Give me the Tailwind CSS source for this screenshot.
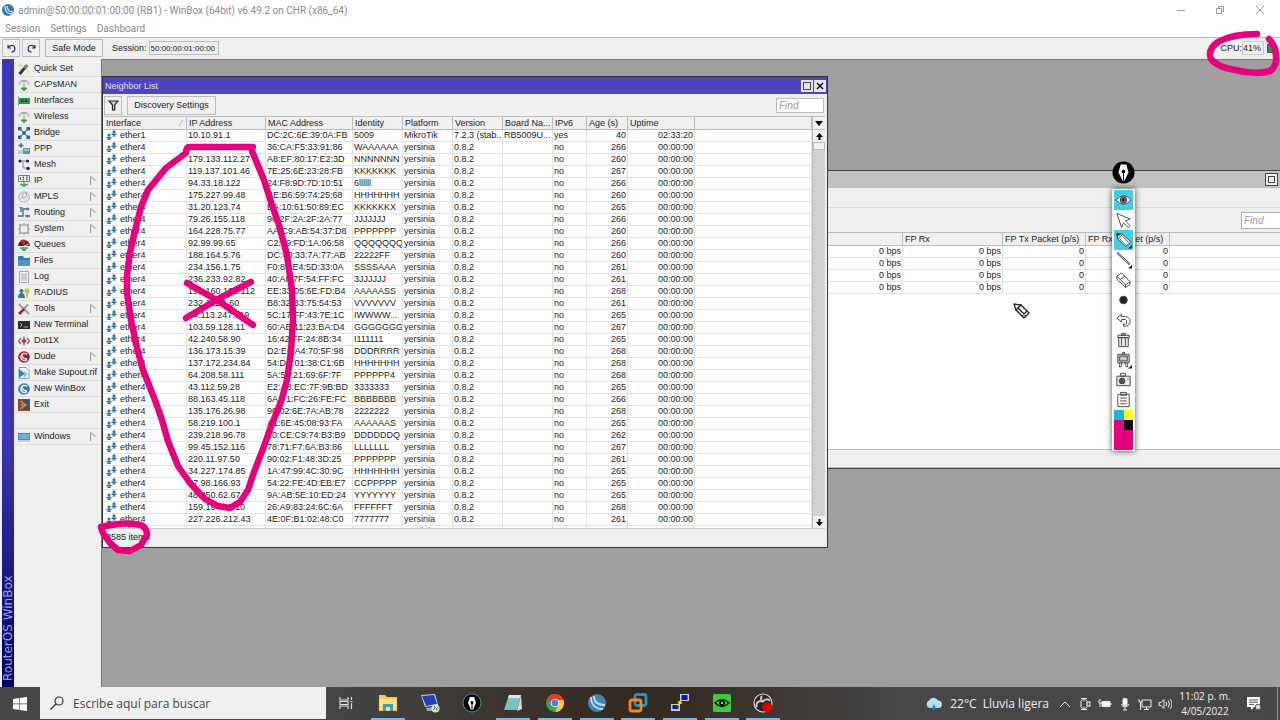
<!DOCTYPE html>
<html lang="es">
<head>
  <meta charset="UTF-8">
  <meta name="viewport" content="width=device-width, initial-scale=1">
  <title>admin@50:00:00:01:00:00 (RB1) - WinBox</title>
  <script src="https://cdn.jsdelivr.net/npm/@tailwindcss/browser@4"></script>
</head>
<body class="relative h-screen flex flex-col overflow-hidden bg-[#9f9f9f] text-[9px] leading-[11px] text-[#222] font-['Liberation_Sans',sans-serif]">

  <!-- title bar -->
  <header class="bg-white text-[#8a8a8a] text-[10px] font-['Roboto',sans-serif]">
    <div class="h-5 flex items-center pl-[2px]">
      <svg class="w-3 h-3 mr-1" viewBox="0 0 12 12"><circle cx="6" cy="6" r="6" fill="#2f78b4"/><path d="M3 2c0 5 2 8 7 8M5 2c0 3 2 6 6 6" stroke="#d5e8f5" stroke-width="1.3" fill="none"/></svg>
      <h1 class="whitespace-nowrap">admin@50:00:00:01:00:00 (RB1) - WinBox (64bit) v6.49.2 on CHR (x86_64)</h1>
      <div class="ml-auto flex">
        <button class="w-[39px] flex justify-center" aria-label="Minimizar"><svg class="w-[10px] h-[10px]" viewBox="0 0 10 10"><path d="M1 5.5h8" stroke="#999"/></svg></button>
        <button class="w-[39px] flex justify-center" aria-label="Restaurar"><svg class="w-[10px] h-[10px]" viewBox="0 0 10 10" fill="none" stroke="#999"><path d="M1.500 3.500h5v5h-5zM3.500 3v-1.500h5v5h-1.500"/></svg></button>
        <button class="w-[41px] flex justify-center" aria-label="Cerrar"><svg class="w-[10px] h-[10px]" viewBox="0 0 10 10"><path d="M1 1l8 8M9 1l-8 8" stroke="#999"/></svg></button>
      </div>
    </div>
    <nav class="h-[17px] flex items-center gap-[10px] pl-[5px]">
      <button>Session</button>
      <button>Settings</button>
      <button>Dashboard</button>
    </nav>
  </header>

  <!-- toolbar -->
  <div class="h-[22px] flex items-center bg-[#efefef] border-t border-[#b5b5b5] pl-[2px] pb-px text-[9px]">
    <button class="w-[18px] h-[18px] mr-[2px] border border-[#bbb] flex items-center justify-center" aria-label="Undo"><svg class="w-[9px] h-[9px]" viewBox="0 0 9 9" fill="none" stroke="#2c2c80" stroke-width="1.200"><path d="M1 1v3h3M1.500 3.500a3.300 3.300 0 1 1 3 4.500"/></svg></button>
    <button class="w-[18px] h-[18px] mr-[5px] border border-[#bbb] flex items-center justify-center" aria-label="Redo"><svg class="w-[9px] h-[9px]" viewBox="0 0 9 9" fill="none" stroke="#2c2c80" stroke-width="1.200"><path d="M8 1v3H5M7.500 3.500a3.300 3.300 0 1 0-3 4.500"/></svg></button>
    <button class="w-[58px] h-[18px] mr-[9px] border border-[#bbb]">Safe Mode</button>
    <label for="session" class="mr-[2px]">Session:</label>
    <input id="session" class="w-[70px] h-[14px] border border-[#bbb] pl-px text-[8px]" value="50:00:00:01:00:00" readonly>
    <div class="ml-auto flex items-center pr-1">
      <label for="cpu">CPU:</label>
      <input id="cpu" class="w-[22px] h-[14px] border border-[#ccc] text-[9px]" value="41%" readonly>
      <span class="w-[9px] h-[9px] ml-[3px] bg-[#1c9e3d] border border-[#555]"></span>
    </div>
  </div>

  <main class="flex-1 min-h-0 flex">
    <!-- main menu -->
    <aside class="w-[101px] shrink-0 flex bg-[#efefef] pl-[2px]">
      <div class="w-3 flex items-center justify-start pt-[6px] pb-[6px] rotate-180 [writing-mode:vertical-rl] bg-linear-to-t from-[#3e36b4] from-60% to-[#000060]">
        <span class="text-[12px] leading-3 text-[#a0a0dd] whitespace-nowrap font-['DejaVu_Sans',sans-serif]">RouterOS WinBox</span>
      </div>
      <nav id="menu" class="flex-1 pl-px pt-[2px]"></nav>
    </aside>

    <section class="relative flex-1 overflow-hidden border-t border-l border-[#777]">
      <!-- interface list, behind -->
      <div class="absolute top-[110px] left-[600px] right-[-16px] flex flex-col bg-[#efefef] border border-[#444]">
        <div class="h-[17px] flex items-center justify-end bg-[#c0c0c0] pr-[17px]">
          <button class="w-[13px] h-[13px] border border-[#444] bg-[#eee] p-[2px]" aria-label="Maximizar"><span class="block w-full h-full border border-[#444]"></span></button>
        </div>
        <div class="h-5 border-b border-[#ddd]"></div>
        <div class="h-6 flex items-center justify-end">
          <input class="w-[54px] h-[17px] border border-[#aaa] bg-white pl-[2px] text-[10px] italic placeholder:text-[#999]" placeholder="Find" aria-label="Find interface">
        </div>
        <div class="h-[217px] bg-white overflow-hidden">
          <table class="w-full table-fixed border-separate border-spacing-0 text-left">
            <colgroup><col class="w-[200px]"><col class="w-[100px]"><col class="w-[83px]"><col class="w-[84px]"><col></colgroup>
            <thead><tr id="fp-head"></tr></thead>
            <tbody id="fp-body"></tbody>
          </table>
        </div>
        <div class="h-[19px] border-t border-b border-[#bbb]"></div>
      </div>

      <!-- neighbor list -->
      <div class="absolute top-[16px] left-0 w-[726px] flex flex-col bg-[#efefef] border border-[#333]">
        <div class="h-[17px] flex items-center bg-[#4d45be] text-[#e2e2f8] pl-[2px] pr-px">
          <h2 class="pt-px">Neighbor List</h2>
          <button class="ml-auto w-3 h-3 bg-[#e4e4e4] p-[2px]" aria-label="Maximizar"><span class="block w-full h-full border border-[#444]"></span></button>
          <button class="ml-px w-3 h-3 bg-[#e4e4e4] flex items-center justify-center" aria-label="Cerrar"><svg class="w-2 h-2" viewBox="0 0 8 8"><path d="M1 1l6 6M7 1l-6 6" stroke="#111" stroke-width="1.500"/></svg></button>
        </div>
        <div class="h-[22px] flex items-center pl-px pr-[3px]">
          <button class="w-[18px] h-[19px] mr-[5px] border border-[#bbb] flex items-center justify-center" aria-label="Filtrar"><svg class="w-[11px] h-[11px]" viewBox="0 0 11 11"><path d="M1 1h9L6.800 5v5H4.500V5z" fill="#b9d0e8" stroke="#222" stroke-width="1.200"/></svg></button>
          <button class="w-[89px] h-[19px] border border-[#bbb]">Discovery Settings</button>
          <input class="ml-auto w-12 h-[15px] border border-[#bbb] bg-white pl-[2px] text-[10px] italic placeholder:text-[#999]" placeholder="Find" aria-label="Find neighbor">
        </div>
        <div class="h-[413px] flex ml-px mr-[2px] bg-white overflow-hidden border-b border-[#ccc]">
          <table class="flex-1 w-full self-start table-fixed border-separate border-spacing-0 text-left">
            <colgroup><col class="w-[83px]"><col class="w-[79px]"><col class="w-[87px]"><col class="w-[50px]"><col class="w-[50px]"><col class="w-[50px]"><col class="w-[50px]"><col class="w-[34px]"><col class="w-[41px]"><col class="w-[67px]"><col></colgroup>
            <thead><tr id="nb-head"></tr></thead>
            <tbody id="nb-body"></tbody>
          </table>
          <div class="w-[13px] flex flex-col items-stretch border-l border-[#bbb] bg-[#d2d2d2]">
            <button class="h-[14px] bg-[#efefef] border-y border-[#bbb] flex items-center justify-center" aria-label="Columnas"><svg class="w-2 h-[5px]" viewBox="0 0 8 5"><path d="M0 0h8L4 5z"/></svg></button>
            <button class="h-3 bg-[#efefef] flex items-center justify-center" aria-label="Subir"><svg class="w-[7px] h-[7px]" viewBox="0 0 7 7"><path d="M3.500 0L7 4H4.500v3h-2V4H0z"/></svg></button>
            <div class="h-2 bg-[#efefef] border border-[#bbb]"></div>
            <button class="mt-auto h-3 bg-[#efefef] flex items-center justify-center" aria-label="Bajar"><svg class="w-[7px] h-[7px]" viewBox="0 0 7 7"><path d="M3.500 7L7 3H4.500V0h-2v3H0z"/></svg></button>
          </div>
        </div>
        <div class="h-[18px] flex items-center pl-[3px] pb-[2px]">3585 items</div>
      </div>
    </section>
  </main>

  <!-- taskbar -->
  <footer class="h-[33px] flex items-stretch text-[#f0f0f0] font-['Open_Sans',sans-serif] bg-linear-to-r from-[#474747] from-25% via-[#33291f] via-50% to-[#474747] to-70%">
    <button class="w-10 flex items-center justify-center" aria-label="Inicio"><svg class="w-[14px] h-[14px]" viewBox="0 0 14 14" fill="#fff"><path d="M0 2l6-.9v5.500H0zM6.600 1L14 0v6.600H6.600zM0 7.200h6v5.600L0 12zM6.600 7.200H14V14l-7.400-1z"/></svg></button>
    <label class="w-[286px] mb-px flex items-center gap-[9px] bg-[#f0f0f0] pl-[10px] text-[#444]">
      <svg class="w-[14px] h-[14px]" viewBox="0 0 14 14" fill="none" stroke="#333" stroke-width="1.200"><circle cx="9" cy="5" r="4"/><path d="M6 8l-5.500 5.500"/></svg>
      <input class="flex-1 min-w-0 text-[12px] placeholder:text-[#444] outline-none" placeholder="Escribe aquí para buscar" aria-label="Buscar">
    </label>
    <div id="tasks" class="w-[458px] flex"></div>
    <div class="ml-auto flex items-center pr-[2px]">
      <button class="flex items-center text-[12px] leading-4 mr-[6px]">
        <svg class="w-[18px] h-[14px] mr-[7px]" viewBox="0 0 18 14"><path d="M4.500 11a4 4 0 0 1-.5-7.500A5 5 0 0 1 13 3.500a3.800 3.800 0 0 1 1 7.500z" fill="#b9dff5"/><path d="M9 7l2 4a2 2 0 1 1-4 0z" fill="#2b86c9"/></svg>
        <span class="mr-[6px]">22°C</span><span>Lluvia ligera</span>
      </button>
      <div id="tray" class="flex items-center"></div>
      <div class="w-[60px] text-center text-[10px] leading-[15px] whitespace-nowrap"><p>11:02 p. m.</p><p>4/05/2022</p></div>
      <button class="w-[38px] flex justify-center" aria-label="Notificaciones"><svg class="w-[14px] h-[14px]" viewBox="0 0 14 14"><path d="M0 0h13v10H7l-3 3v-3H0z" fill="#fff"/><path d="M2 3h9M2 5.200h9M2 7.400h5" stroke="#555"/><circle cx="11" cy="10" r="2.800" fill="#ddd" stroke="#555"/></svg></button>
      <span class="w-px h-[33px] ml-1 bg-[#888]"></span>
    </div>
  </footer>

  <!-- drawing tools palette -->
  <div class="absolute left-[1112px] top-[161px] w-[23px] flex flex-col items-center">
    <svg class="w-[23px] h-[23px] mb-[5px]" viewBox="0 0 22 23"><circle cx="11" cy="11.500" r="11" fill="#000"/><path d="M8.200 3.500h5.600l2.200 8-4 8h-2l-4-8z" fill="#fff"/><path d="M11 11v8" stroke="#000"/><circle cx="11" cy="10.500" r="1.800"/></svg>
    <div class="w-[23px] px-[2px] py-px bg-white shadow-[0_0_6px_rgba(0,0,0,.7)]">
      <div id="tools"></div>
      <div class="grid grid-cols-2">
        <button class="h-[10px] bg-[#17b8dc]" aria-label="Cian"></button>
        <button class="h-[10px] bg-[#ffff1a]" aria-label="Amarillo"></button>
        <button class="h-[10px] bg-[#e6007e]" aria-label="Magenta"></button>
        <button class="h-[10px] bg-black" aria-label="Negro"></button>
        <span class="h-5 col-span-2 bg-[#e6007e]"></span>
      </div>
    </div>
  </div>

  <!-- ink and pencil cursor -->
  <svg class="absolute left-0 top-0 w-[1280px] h-[720px] pointer-events-none" viewBox="0 0 1280 720" fill="none" stroke="#e6007e" stroke-width="6.500" stroke-linecap="round" stroke-linejoin="round">
    <path d="M253 147H190Q186 147 186 153L166 168 148 190 141 207 134 235 130 253 127 275 127 293 131 320 137 348 143 370 151 390 155 400 162 420 168 441 178 466 190 483 205 499 218 506 230 508 240 502 248 490 254 472 263 449 272 424 281 402 287 380 291 352 293 320 292 290 287 255 279 225 272 205 264 180 252 151"/>
    <path d="M187 283L220 302 253 325M186 318L220 298 251 282"/>
    <path d="M101 527Q125 521 141 525Q147 528 147 535L141 545 130 551 118 550 110 543 103 533 101 527"/>
    <path d="M1257 34Q1232 34 1218 42Q1207 50 1211 59Q1217 67 1235 70Q1255 75 1270 71Q1277 66 1276 56Q1276 46 1269 39"/>
    <g stroke="#222" stroke-width="1.300" fill="#fff"><path d="M1014 304l2 6 8 8 5-5-8-8z"/><path d="M1016 310l5-5M1018 308l8 8M1022 316l5-5"/></g>
  </svg>

<script>
const svg12 = (body) => `<svg class="w-3 h-3 shrink-0" viewBox="0 0 12 12">${body}</svg>`;

const antenna = '<path d="M1 6a5 4.500 0 0 1 10 0M6 2v7" stroke="#9ab0a8" stroke-width="1.300" fill="none"/><path d="M3 9.500h6M5 11h2" stroke="#3da03d" stroke-width="1.800"/>';
const swirl = (c) => `<circle cx="6" cy="6" r="5.800" fill="${c}"/><path d="M9 3.500a3.600 3.600 0 1 0 0 5M4 3c0 3 2 5 5 5" stroke="#fff" stroke-width="1.300" fill="none"/>`;

const menu = [
  ['Quick Set', '<path d="M1.500 11L9 2.500" stroke="#333" stroke-width="3"/><path d="M6.500 5.500L9.500 2" stroke="#888" stroke-width="2"/><path d="M2.500 0v5M0 2.500h5M10 7v3" stroke="#e6dc4a"/>'],
  ['CAPsMAN', antenna],
  ['Interfaces', '<path d="M.5 1v10" stroke="#999"/><path d="M1 3h11v6H1z" fill="#2a9b32"/><path d="M3 4.500h2.500v2.500H3zM7 4.500h2.500v2.500H7z" fill="#115a18"/>'],
  ['Wireless', antenna],
  ['Bridge', '<path d="M1 1l10 10M11 1L1 11" stroke="#5e8fb0" stroke-width="1.300"/><path d="M0 0h3.500v3.500H0zM8.500 0H12v3.500H8.500zM0 8.500h3.500V12H0zM8.500 8.500H12V12H8.500zM4.300 4.300h3.400v3.400H4.300z" fill="#33678f"/>'],
  ['PPP', '<path d="M3 0v5M.5 2.500h5" stroke="#33678f" stroke-width="1.300"/><path d="M0 7h5v4H0z" fill="#b8cddb"/><path d="M5 5h7v6H5z" fill="#5b93bb"/><path d="M6 7h5" stroke="#dcebf5"/>'],
  ['Mesh', '<path d="M2 2h7M5 2v7h5" stroke="#888" fill="none"/><circle cx="2" cy="2" r="1.600" fill="#23237a"/><circle cx="9.500" cy="2" r="1.600" fill="#23237a"/><circle cx="10" cy="9.500" r="1.800" fill="#23237a"/>'],
  ['IP', '<path d="M.5.500h11v6H.5z" fill="#f5f5f5" stroke="#777"/><path d="M2.500 2v3M4.500 2h1.500l-1 1.300 1 1.500h-1.500M8 2h1.500l-1 1.300 1 1.500H8" stroke="#333" fill="none" stroke-width=".8"/><path d="M6 7v2" stroke="#777"/><path d="M2 9.500h8M4.500 11h3" stroke="#3da03d" stroke-width="1.700"/>', 1],
  ['MPLS', '<circle cx="6" cy="6" r="5.300" fill="#dfe5e8" stroke="#a9b4ba"/><path d="M4 7l1-4 4-1-1 4z" fill="#fff" stroke="#8b989f" stroke-width=".8"/>', 1],
  ['Routing', '<path d="M0 9h5V2h6M3 2v3M7 9h5" stroke="#33678f" stroke-width="1.300" fill="none"/><path d="M9 0l3 2-3 2zM9 7l3 2-3 2zM1 0h4L3 3z" fill="#4c82a8"/>', 1],
  ['System', '<rect x="2" y="2" width="8" height="8" fill="none" stroke="#b4bfbc" stroke-width="2"/><path d="M1 1l2 2M11 1L9 3M1 11l2-2M11 11L9 9M6 0v2M6 10v2M0 6h2M10 6h2" stroke="#9caaa6" stroke-width="1.500"/>', 1],
  ['Queues', '<path d="M0 7a6 6 0 0 1 12 0z" fill="#4a2424"/><path d="M6 7L2 2a6 6 0 0 1 6-1z" fill="#c22333"/><path d="M6 7l5-2" stroke="#eee" stroke-width=".8"/><path d="M2 9h8M4 10.800h4" stroke="#3da03d" stroke-width="1.700"/>'],
  ['Files', '<path d="M0 1h5l1 2h6v8H0z" fill="#2f7fae"/><path d="M0 5h12v6H0z" fill="#4b97c2"/>'],
  ['Log', '<path d="M1.500.500h9v11h-9z" fill="#f6f6f6" stroke="#9aa7ac"/><path d="M3 3h6M3 5h6M3 7h6M3 9h6" stroke="#8d9ba1" stroke-width=".8"/>'],
  ['RADIUS', '<circle cx="3.500" cy="4" r="2" fill="#33789f"/><path d="M0 11q0-5 3.500-5T7 11z" fill="#33789f"/><circle cx="9" cy="4" r="2.500" fill="#b6c72f"/><path d="M9 5v6" stroke="#b6c72f" stroke-width="1.600"/>'],
  ['Tools', '<path d="M1 1l10 10" stroke="#999" stroke-width="2"/><path d="M1 11l5-5" stroke="#9c1f2c" stroke-width="2.500"/><path d="M6 6l4-4.500" stroke="#777" stroke-width="1.300"/>', 1],
  ['New Terminal', '<path d="M0 2h12v8H0z" fill="#2b2b2b"/><path d="M2 4l2 2-2 2M5.500 8H10" stroke="#ccc" stroke-width=".8" fill="none"/>'],
  ['Dot1X', '<path d="M3 3L.500 6 3 9M9 3l2.500 3L9 9" stroke="#666" fill="none" stroke-width="1.200"/><path d="M6 1.500v9M3.500 6h5" stroke="#b0303f" stroke-width="1.300"/><circle cx="6" cy="6" r="1.900" fill="#b0303f"/>'],
  ['Dude', swirl('#b5152b'), 1],
  ['Make Supout.rif', '<path d="M1 .5h7l3 3v8H1z" fill="#f2f5f7" stroke="#8aa0ad"/><path d="M1 2l6 4.500L1 11z" fill="#2f86b5"/><path d="M6 4l4 3-4 4z" fill="#8cc0da"/>'],
  ['New WinBox', swirl('#2d7db4')],
  ['Exit', '<path d="M0 0h12v12H0z" fill="#8a4a26"/><path d="M6 1h5v10H6z" fill="#3b5563"/><path d="M2 2l6 4-6 4M3 6h6" stroke="#d88a50" stroke-width="1.300" fill="none"/>'],
  null,
  ['Windows', '<path d="M0 2h12v7H0z" fill="#3a8fc4"/><path d="M1 3h10v5H1z" fill="#67b2dd"/><path d="M0 10h12" stroke="#aaa"/>', 1],
];
document.getElementById('menu').innerHTML = menu.map(m => m
  ? `<button class="w-full h-4 flex items-center pl-[3px] gap-1 border-b border-[#dcdcdc] text-left whitespace-nowrap">${svg12(m[1])}<span class="flex-1">${m[0]}</span>${m[2] ? '<svg class="w-[6px] h-[9px] mr-[5px]" viewBox="0 0 6 9"><path d="M.5 9V.500l5 4" fill="none" stroke="#999"/></svg>' : ''}</button>`
  : '<div class="h-4 border-b border-[#dcdcdc]"></div>').join('');

// neighbors: ip, mac, identity, age
const rows = `181.31.147.77|36:CA:F5:33:91:86|WAAAAAA|266
179.133.112.27|A8:EF:80:17:E2:3D|NNNNNNN|260
119.137.101.46|7E:25:6E:23:28:FB|KKKKKKK|267
94.33.18.122|24:F8:9D:7D:10:51|6llllll|266
175.227.99.48|BE:B6:59:74:25:68|HHHHHHH|260
31.20.123.74|BA:10:61:50:89:EC|KKKKKKX|265
79.26.155.118|90:2F:2A:2F:2A:77|JJJJJJJ|266
164.228.75.77|AA:C9:AB:54:37:D8|PPPPPPP|260
92.99.99.65|C2:89:FD:1A:06:58|QQQQQQQ|266
188.164.5.76|DC:40:33:7A:77:AB|22222FF|260
234.156.1.75|F0:85:E4:5D:33:0A|SSSSAAA|261
236.233.92.82|40:A0:7F:54:FF:FC|3JJJJJJ|261
193.160.101.112|EE:33:05:6E:FD:B4|AAAAASS|268
232.111.1.60|B8:32:B3:75:54:53|VVVVVVV|261
84.113.247.119|5C:17:FF:43:7E:1C|IWWWW...|265
103.59.128.11|60:AB:11:23:BA:D4|GGGGGGG|267
42.240.58.90|16:42:FF:24:8B:34|I111111|265
136.173.15.39|D2:E0:A4:70:5F:98|DDDRRRR|268
137.172.234.84|54:DA:01:38:C1:6B|HHHHHHH|268
64.208.58.111|5A:54:21:69:6F:7F|PPPPPP4|268
43.112.59.28|E2:A8:EC:7F:9B:BD|3333333|265
88.163.45.118|6A:F1:FC:26:FE:FC|BBBBBBB|266
135.176.26.98|90:02:6E:7A:AB:78|2222222|268
58.219.100.1|A1:6E:45:08:93:FA|AAAAAAS|265
239.218.96.78|20:CE:C9:74:B3:B9|DDDDDDQ|262
99.45.152.116|78:71:F7:6A:B3:86|LLLLLLL|267
220.11.97.50|90:02:F1:48:3D:25|PPPPPPP|261
34.227.174.85|1A:47:99:4C:30:9C|HHHHHHH|265
37.98.166.93|54:22:FE:4D:EB:E7|CCPPPPP|265
48.250.62.67|9A:AB:5E:10:ED:24|YYYYYYY|265
159.194.11.10|26:A9:83:24:6C:6A|FFFFFFT|268
227.226.212.43|4E:0F:B1:02:48:C0|7777777|261
191.189.168.73|29:DF:94:94:29:08|4UUUUUU|267`.split('\n').map(l => {
  const [ip, mac, id, age] = l.split('|');
  return ['ether4', ip, mac, id, 'yersinia', '0.8.2', '', 'no', age, '00:00:00', ''];
});
rows.unshift(['ether1', '10.10.91.1', 'DC:2C:6E:39:0A:FB', '5009', 'MikroTik', '7.2.3 (stab...', 'RB5009U...', 'yes', '40', '02:33:20', '']);

const th = (t) => `<th class="h-[14px] pl-[2px] font-normal bg-[#efefef] border-y border-r border-[#bbb] whitespace-nowrap overflow-hidden">${t}</th>`;
const td = (t, right) => `<td class="h-3 border-b border-r border-[#e2e2e2] whitespace-nowrap overflow-hidden ${right ? 'pr-px text-right' : 'pl-px'}">${t}</td>`;
const peers = '<svg class="inline-block align-top w-[11px] h-[10px] ml-px mr-[3px]" viewBox="0 0 10 10" fill="#2f719c"><circle cx="2.500" cy="5" r="1.500"/><path d="M0 7h5v1.500H0zM2 6h1v4H2zM1 9h3v1H1zM5 3.500h5V5H5zM7 3h1v3H7zM6 5.500h3v1H6z"/><circle cx="7.500" cy="1.700" r="1.500"/></svg>';

document.getElementById('nb-head').innerHTML = ['<span class="flex justify-between">Interface<span class="pr-1 text-[#999]">⁄</span></span>', 'IP Address', 'MAC Address', 'Identity', 'Platform', 'Version', 'Board Na...', 'IPv6', 'Age (s)', 'Uptime', ''].map(th).join('');
document.getElementById('nb-body').innerHTML = rows.map(r => '<tr>' + r.map((c, i) => td(i ? c : peers + c, i === 8 || i === 9)).join('') + '</tr>').join('');

document.getElementById('fp-head').innerHTML = ['', 'FP Rx', 'FP Tx Packet (p/s)', 'FP Rx Packet (p/s)', ''].map(th).join('');
document.getElementById('fp-body').innerHTML = Array(4).fill(['0 bps', '0 bps', '0', '0', '']).map(r => '<tr>' + r.map(c => td(c, true)).join('') + '</tr>').join('');

// palette buttons: name, drawing, selected
const more = '<path d="M19 15v4h-4z" fill="#111" stroke="none"/>';
const tools = [
  ['Visible', '<path d="M2 10q8-9 16 0-8 9-16 0z" fill="#fff"/><circle cx="10" cy="10" r="3.500" fill="#777"/><circle cx="10" cy="10" r="1.500" fill="#111"/>', 1],
  ['Cursor', '<path d="M3 3l14 6-5 2 5 5-2 2-5-5-2 5z" fill="#fff"/>'],
  ['Lápiz', '<path d="M3 3l1 6 8 8 6-5-9-8z" fill="#fff"/><path d="M3 3l4 .500-3.500 3z" fill="#111"/><path d="M4 9l5-5M6 9l7 7M9 6l7 7" />' + more, 1],
  ['Línea', '<path d="M3 3l13 12 1-1L4 2z" fill="#ddd"/>' + more],
  ['Borrador', '<path d="M3 6l5-3.500L17 12l-.5 3-4.500 3-9-9z" fill="#fff"/><path d="M3 6l9 9 5-3M12 15v3M6.500 9.500l5-3.500"/>'],
  ['Tamaño', '<circle cx="10" cy="10" r="4" fill="#222"/>'],
  ['Deshacer', '<path d="M3 8l5-4v2.500h4a5 5 0 0 1 0 10H10v-2h2a3 3 0 0 0 0-5H8V12z" fill="#fff"/>'],
  ['Limpiar', '<path d="M4 5h12v2.500H4zM5 7.500h10v9.500H5zM8 3h4v2H8zM8 8v8M12 8v8" fill="#eee"/>'],
  ['Pizarra', '<path d="M4 4h12v9H4z" fill="#ccc"/><path d="M6 6h8v5H6zM9 2h2v2H9zM6 13v4M8 13v3M12 13v3M14 13v4M5 17h3M12 17h3"/>' + more],
  ['Captura', '<path d="M3 6h14v10H3zM7 3h5v3H7z" fill="#eee"/><circle cx="8.500" cy="11" r="3" fill="#555"/><path d="M14 9h1.500"/>'],
  ['Portapapeles', '<path d="M4 4h12v13H4z" fill="#fff"/><path d="M7 2h6v3H7zM6.500 8h7M6.500 11h7M6.500 14h7"/>'],
];
document.getElementById('tools').innerHTML = tools.map(t =>
  `<button class="flex items-center justify-center w-full h-5 ${t[2] ? 'bg-[#45cfe4]' : 'bg-white'}" aria-label="${t[0]}"><svg class="w-[19px] h-5" viewBox="0 0 20 20" fill="none" stroke="#444" stroke-width="1">${t[1]}</svg></button>`).join('');

// taskbar apps: name, drawing, open
const tasks = [
  ['Vista de tareas', '<path d="M3 4v3h8V4M3 16v-3h8v3M3 8.500h8v3H3zM14.500 4v3M14.500 10v6M13.500 8.500h2" fill="none" stroke="#ddd" stroke-width="1.200"/>'],
  ['Explorador', '<path d="M1 2h6l2 2h10v14H1z" fill="#f6cb50"/><path d="M1 6h18v11H1z" fill="#fbdd7c"/><path d="M5 18v-7h10v7h-3v-4H8v4z" fill="#4597c4"/>', 1],
  ['Escritorio remoto', '<path d="M1 2l14-1 3 11-13 2z" fill="#c9d3e6"/><path d="M2 3l12-1 3 9-11 2z" fill="#2440b8"/><path d="M6 15l8-1 1 4H7z" fill="#9aa"/><circle cx="15.500" cy="15.500" r="4" fill="#d9e8dc"/><path d="M13 17l2-2-1-2M18 14l-2 2 1 2" stroke="#3a8d45" fill="none"/>'],
  ['Epic Pen', '<circle cx="10" cy="10" r="9" fill="#000" stroke="#4a8f95"/><path d="M8 4h4l2 6-3 7H9l-3-7z" fill="#fff"/><path d="M10 10v7" stroke="#000"/><circle cx="10" cy="9.500" r="1.500"/>'],
  ['Bloc de notas', '<path d="M6 2h12l-4 15H1z" fill="#79bfc4"/><path d="M6 2h12l-1 3H5z" fill="#d5eaec"/><path d="M18 2l1 14-5 2z" fill="#dadada"/>', 1],
  ['Chrome', '<circle cx="10" cy="10" r="9" fill="#35a552"/><path d="M2.200 5.500A9 9 0 0 1 18.500 7H10a4 4 0 0 0-3.800 4.500z" fill="#e53e30"/><path d="M10 19a9 9 0 0 0 8.500-12H10l3.500 5z" fill="#fcc934"/><circle cx="10" cy="10" r="4.300" fill="#fff"/><circle cx="10" cy="10" r="3.400" fill="#3f82ee"/>', 1],
  ['WinBox', '<circle cx="10" cy="10" r="9" fill="#4684b8"/><path d="M4 4c0 7 4 12 12 12M7 3c0 6 3 9 11 9" stroke="#c9e0f2" stroke-width="1.800" fill="none"/>', 1],
  ['VMware', '<rect x="7" y="1.500" width="11" height="11" rx="2" fill="none" stroke="#2a93b5" stroke-width="2.800"/><rect x="2" y="7" width="11" height="11" rx="2" fill="none" stroke="#ee8a23" stroke-width="2.800"/>', 1],
  ['PuTTY', '<path d="M10 1h9v7h-9zM1 11h9v7H1z" fill="#ccc"/><path d="M11.500 2h6v5h-6zM2.500 12h6v4h-6z" fill="#1414b8"/><path d="M11 8l-2 1 2 1-4 2" stroke="#f3e52d" stroke-width="1.500" fill="none"/>', 1],
  ['Visor', '<rect x="1" y="1" width="18" height="18" rx="1.500" fill="#3cc93c"/><path d="M3 10q7-7 14 0-7 7-14 0z" fill="#3cc93c" stroke="#111" stroke-width="1.300"/><circle cx="10" cy="10" r="2.800"/><circle cx="10" cy="10" r="1" fill="#fff"/>', 1],
  ['OBS', '<circle cx="10" cy="10" r="9" fill="#292929" stroke="#ddd" stroke-width="1.200"/><path d="M9 3a4 4 0 0 0 1 6M4 14a4 4 0 0 1 6-5M10 9a4 4 0 0 1 7-1" stroke="#ccc" stroke-width="2" fill="none"/><circle cx="14.500" cy="14.500" r="5" fill="#e60000"/>', 1],
];
document.getElementById('tasks').innerHTML = tasks.map(t =>
  `<button class="flex-1 flex flex-col items-center justify-between" aria-label="${t[0]}"><svg class="w-5 h-5 mt-[6px]" viewBox="0 0 20 20">${t[1]}</svg><span class="w-[34px] h-[2px] ${t[2] ? 'bg-[#7ab6e0]' : ''}"></span></button>`).join('');

const tray = [
  ['Mostrar iconos', '<path d="M2 10l5-5 5 5"/>'],
  ['Cámara', '<rect x="3" y="3" width="6" height="8" rx="1.500"/><path d="M9 6l3-1.500v5L9 8M3 1.500h6M3 12.500h6"/>'],
  ['Batería', '<path d="M4 4.500h8v5H4z" fill="#eee"/><path d="M13 6v2M1 3v3h3M1 3h2M2 6v4"/>'],
  ['Micrófono', '<rect x="5" y="1.500" width="4" height="7" rx="1" fill="#fff"/><path d="M3.500 7q0 3 3.500 3t3.500-3M7 10v3M5 13h4"/>'],
  ['Red', '<path d="M4 3h9v7H4zM6 12.500h5M8.500 10v2M1 2v3h3M2.500 5v8"/>'],
  ['Volumen', '<path d="M1 5.500h2l3-3v9l-3-3H1zM8 5q1.500 2 0 4M10 3.500q3 3.500 0 7M12 2q4 5 0 10"/>'],
];
document.getElementById('tray').innerHTML = tray.map(t =>
  `<button class="w-5 flex justify-center" aria-label="${t[0]}"><svg class="w-[14px] h-[14px]" viewBox="0 0 14 14" fill="none" stroke="#eee" stroke-width="1">${t[1]}</svg></button>`).join('');
</script>
</body>
</html>
